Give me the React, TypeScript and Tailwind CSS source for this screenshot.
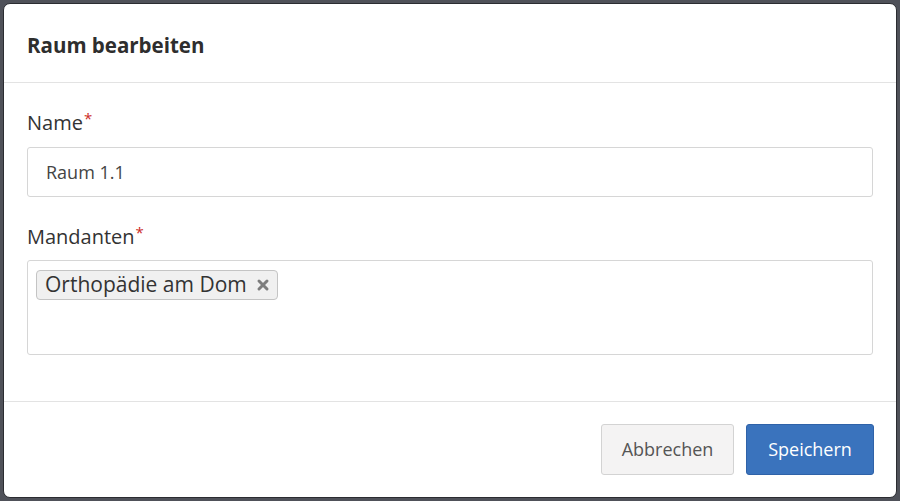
import { X } from 'lucide-react'

const Label = ({ text }: { text: string }) => (
    <label className="flex items-start text-[20px] leading-[24px] text-[#333333]">
        {text}
        <span className="ml-[1px] text-[15px] leading-[15px] text-[#cc2a1f]">*</span>
    </label>
)

const App = () => {
    return (
        <div
            className="flex h-[501px] w-[900px] bg-[#4f5159] p-[3px] text-[#333333]"
            style={{ fontFamily: '"Open Sans", "Liberation Sans", sans-serif' }}
        >
            <div className="flex flex-1 flex-col rounded-[7px] border border-[#2b2c31] bg-white">
                <div className="flex h-[79px] items-center border-b border-[#e3e3e3] px-[23px] pt-[4px]">
                    <h3 className="text-[20.5px] font-bold text-[#2e2e2e]">Raum bearbeiten</h3>
                </div>

                <div className="flex flex-1 flex-col px-[23px] pt-[28px]">
                    <Label text="Name" />
                    <div className="mt-[12px] flex h-[50px] items-center rounded-[3px] border border-[#d6d6d6] px-[18px] text-[18px] text-[#444444]">
                        Raum 1.1
                    </div>

                    <div className="mt-[28px]">
                        <Label text="Mandanten" />
                    </div>
                    <div className="mt-[11px] h-[95px] rounded-[3px] border border-[#d6d6d6] px-[8px] pt-[9px]">
                        <span className="inline-flex h-[30px] items-center gap-[8px] rounded-[4px] border border-[#c4c4c4] bg-[#f0f0f0] pl-[8px] pr-[6px] text-[21px] text-[#333333]">
                            Orthopädie am Dom
                            <X className="h-[16px] w-[16px] text-[#7d7d7d]" strokeWidth={4.5} />
                        </span>
                    </div>
                </div>

                <div className="flex h-[96px] items-center justify-end gap-[12px] border-t border-[#e3e3e3] px-[22px]">
                    <button
                        type="button"
                        className="h-[51px] w-[133px] rounded-[3px] border border-[#d3d3d3] bg-[#f4f3f3] text-[18px] text-[#555555]"
                    >
                        Abbrechen
                    </button>
                    <button
                        type="button"
                        className="h-[51px] w-[128px] rounded-[3px] border border-[#2f62a8] bg-[#3a73bd] text-[18px] text-white"
                    >
                        Speichern
                    </button>
                </div>
            </div>
        </div>
    )
}

export default App
